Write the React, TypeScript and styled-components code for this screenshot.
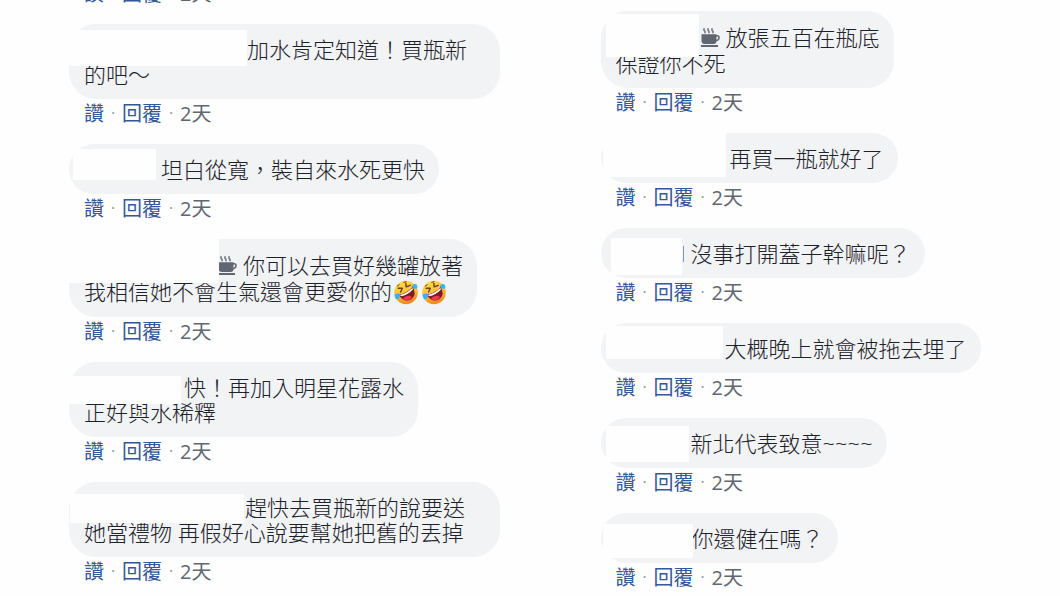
import React from "react";
import styled, { createGlobalStyle } from "styled-components";

const GlobalStyle = createGlobalStyle`
  * { box-sizing: border-box; }
  body {
    margin: 0;
    background: #fefefe;
    color: #1d2129;
    font-family: "Open Sans", "Noto Sans CJK TC", sans-serif;
    font-weight: 300;
  }
`;

const Page = styled.main`
  display: grid;
  grid-template-columns: 1fr 1fr;
  column-gap: 72px;
  height: 100vh;
  padding-left: 69px;
  overflow: hidden;
`;

const Column = styled.section<{ $shift: number }>`
  margin-top: ${(p) => p.$shift}px;
  min-width: 0;
`;

const Bubble = styled.div`
  position: relative;
  width: fit-content;
  max-width: 431px;
  padding: 13px 14px 12px 15px;
  border-radius: 27px;
  background: #f1f3f5;
`;

const Line = styled.div<{ $tall?: boolean }>`
  font-size: 22px;
  line-height: ${(p) => (p.$tall ? 27 : 25)}px;
`;

const NameSpace = styled.span<{ $width: number }>`
  display: inline-block;
  width: ${(p) => p.$width}px;
`;

const Mask = styled.span<{ $box: [number, number, number, number] }>`
  position: absolute;
  left: ${(p) => p.$box[0]}px;
  top: ${(p) => p.$box[1]}px;
  width: ${(p) => p.$box[2]}px;
  height: ${(p) => p.$box[3]}px;
  background: #fefefe;
`;

const NameEdge = styled.span`
  display: inline-block;
  width: 1px;
  height: 16px;
  margin-right: 7px;
  background: #7f95c0;
`;

const Meta = styled.div`
  display: flex;
  height: 45px;
  padding-left: 15px;
  font-size: 20px;
  font-weight: 400;
  line-height: 29px;
`;

const Action = styled.button`
  height: 29px;
  padding: 0;
  border: 0;
  background: none;
  color: #365899;
  font: inherit;
  cursor: pointer;
`;

const Dot = styled.span`
  width: 18px;
  text-align: center;
  color: #90949c;
  font-size: 16px;
`;

const Time = styled.time`
  color: #616770;
`;

const CupIcon = styled.svg`
  width: 20px;
  height: 20px;
  margin-right: 5px;
  vertical-align: -2px;
`;

const EmojiIcon = styled.svg`
  width: 24px;
  height: 25px;
  margin: 0 2px;
  vertical-align: -5px;
`;

function Cup() {
  return (
    <CupIcon viewBox="0 0 20 20" aria-label="coffee">
      <g stroke="#777c86" strokeWidth="1.6" fill="none">
        <path d="M3.5 0.3q-1.300 1.300 0 2.500t0 2.400M7.500 0.3q-1.300 1.300 0 2.500t0 2.400M11.500 0.3q-1.300 1.300 0 2.500t0 2.400" />
        <path d="M14.500 7.700h1.700q1.800 0 1.800 2t-1.800 2.600l-2 .6" stroke="#616770" />
      </g>
      <path d="M0.500 6.300h15v6.700q0 3-3 3h-8.500q-3.500 0-3.500-3z" fill="#616770" />
      <path d="M0 17h17v2h-17z" fill="#616770" />
    </CupIcon>
  );
}

function Laugh() {
  return (
    <EmojiIcon viewBox="0 0 24 25" aria-label="rolling on the floor laughing">
      <defs>
        <linearGradient id="face" x1="0" y1="0" x2="0.3" y2="1">
          <stop offset="0" stopColor="#ffe052" />
          <stop offset="0.55" stopColor="#fdc436" />
          <stop offset="1" stopColor="#f08b24" />
        </linearGradient>
      </defs>
      <circle cx="12" cy="12.500" r="11.800" fill="url(#face)" />
      <path d="M4.500 14.800Q12 14 18.800 7Q23 14.300 17.800 19Q10.300 23.600 4.500 14.800Z" fill="#7d1a26" />
      <path d="M6 14.900Q12.500 13.700 18.300 8.100L19 9.500Q13.600 15.200 7 16.200Z" fill="#fff" />
      <path d="M8.800 19.100Q11.500 15.600 15.500 15.800Q18.300 16 17.500 18.600Q13.300 21.800 8.800 19.100Z" fill="#ee3650" />
      <g fill="none" stroke="#6b3f1d" strokeWidth="1.400" strokeLinecap="round" strokeLinejoin="round">
        <path d="M4.200 8.200L8.300 8.300L6.600 12" />
        <path d="M11.800 3.300L12.200 6.800L16.200 5.300" />
        <path d="M3.200 6.200L5.200 4.700M9.800 2.300L12 1.700" strokeWidth="1" />
      </g>
      <path d="M0.800 14.200Q4.600 12.600 5.900 14.600Q6.200 18.800 3.200 19.200Q0.200 18.800 0.800 14.200Z" fill="#36b4ee" />
      <path d="M17.700 6.300Q19.500 3.200 22.300 4.300Q24.300 6.500 22.600 8.800Q19.500 9.300 17.700 6.300Z" fill="#36b4ee" />
    </EmojiIcon>
  );
}

function Actions() {
  return (
    <Meta>
      <Action type="button">讚</Action>
      <Dot>·</Dot>
      <Action type="button">回覆</Action>
      <Dot>·</Dot>
      <Time>2天</Time>
    </Meta>
  );
}

interface CommentProps {
  name: number;
  mask: [number, number, number, number];
  text: React.ReactNode;
  more?: React.ReactNode;
  cup?: boolean;
  edge?: boolean;
}

function Comment({ name, mask, text, more, cup, edge }: CommentProps) {
  return (
    <article>
      <Bubble>
        <Line $tall={cup}>
          <NameSpace $width={name} />
          {edge && <NameEdge />}
          {cup && <Cup />}
          {text}
        </Line>
        {more && <Line>{more}</Line>}
        <Mask $box={mask} />
      </Bubble>
      <Actions />
    </article>
  );
}

export default function App() {
  return (
    <>
      <GlobalStyle />
      <Page>
        <Column $shift={-21}>
          <Actions />
          <Comment name={163} mask={[0, 6, 178, 36]} text="加水肯定知道！買瓶新的吧～" />
          <Comment name={77} mask={[4, 5, 83, 31]} text="坦白從寬，裝自來水死更快" />
          <Comment
            name={134}
            mask={[0, 0, 150, 44]}
            cup
            text="你可以去買好幾罐放著"
            more={<>我相信她不會生氣還會更愛你的<Laugh /><Laugh /></>}
          />
          <Comment name={100} mask={[0, 14, 112, 28]} text="快！再加入明星花露水" more="正好與水稀釋" />
          <Comment name={161} mask={[1, 12, 174, 29]} text="趕快去買瓶新的說要送她當禮物 再假好心說要幫她把舊的丟掉" />
        </Column>
        <Column $shift={11}>
          <Comment name={85} mask={[5, 3, 93, 43]} cup text="放張五百在瓶底" more="保證你不死" />
          <Comment name={114} mask={[2, 0, 123, 44]} text="再買一瓶就好了" />
          <Comment name={67} mask={[10, 10, 71, 37]} edge text="沒事打開蓋子幹嘛呢？" />
          <Comment name={109} mask={[5, 3, 117, 33]} text="大概晚上就會被拖去埋了" />
          <Comment name={75} mask={[5, 8, 83, 36]} text="新北代表致意~~~~" />
          <Comment name={76} mask={[2, 11, 90, 34]} text="你還健在嗎？" />
        </Column>
      </Page>
    </>
  );
}
